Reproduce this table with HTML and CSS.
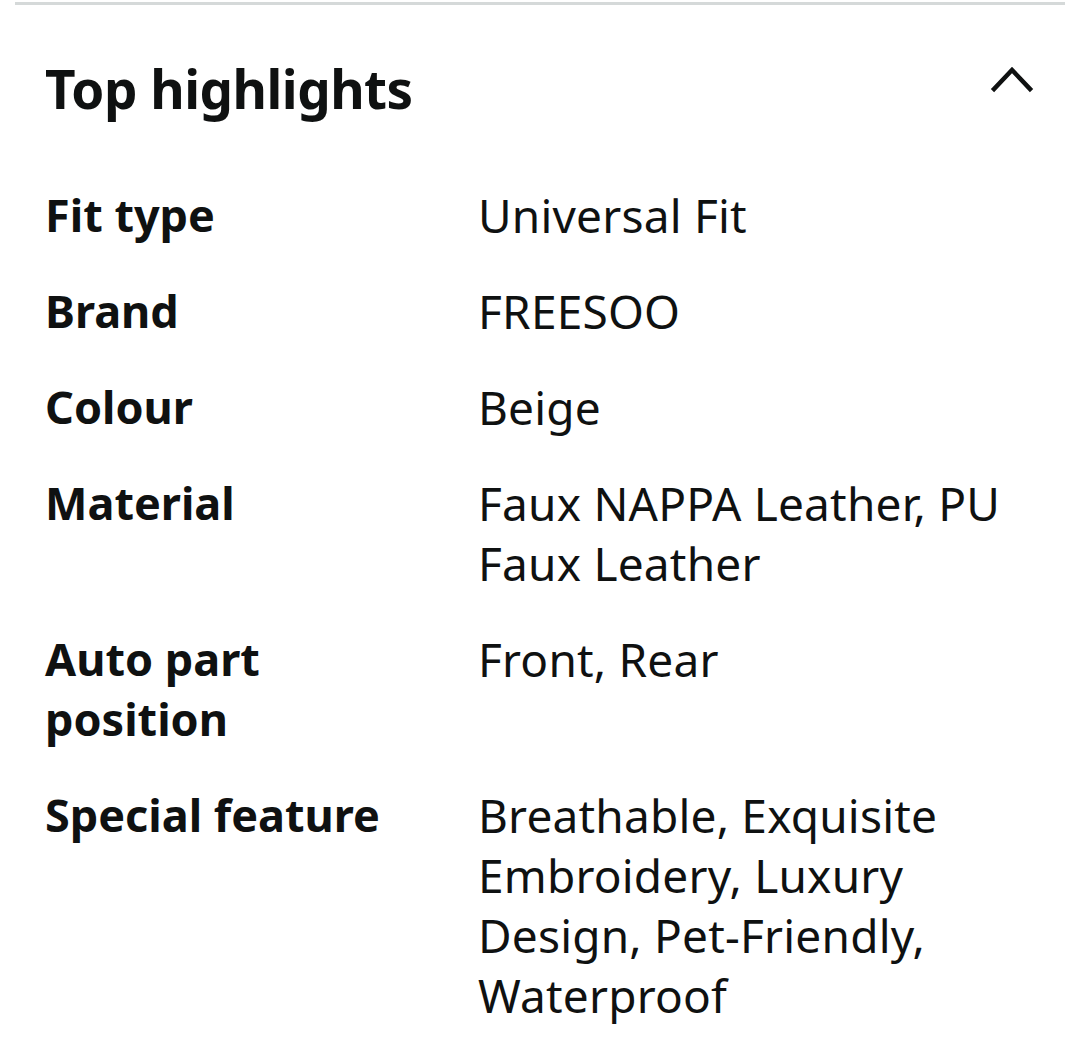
FILE: index.html
```html
<!DOCTYPE html>
<html>
<head>
<meta charset="utf-8">
<link rel="stylesheet" href="styles.css">
</head>
<body>
<div class="panel">
  <div class="rule"></div>
  <div class="head">
    <h2 class="title">Top highlights</h2>
    <svg class="chev" width="44" height="32" viewBox="0 0 44 32"><path d="M4 27 L22 8 L40 27" fill="none" stroke="#0f1111" stroke-width="4.5" stroke-linecap="square" stroke-linejoin="miter"/></svg>
  </div>
  <div class="table">
    <div class="k">Fit type</div><div class="v">Universal Fit</div>
    <div class="k">Brand</div><div class="v">FREESOO</div>
    <div class="k">Colour</div><div class="v">Beige</div>
    <div class="k">Material</div><div class="v">Faux NAPPA Leather, PU Faux Leather</div>
    <div class="k">Auto part position</div><div class="v">Front, Rear</div>
    <div class="k">Special feature</div><div class="v">Breathable, Exquisite Embroidery, Luxury Design, Pet-Friendly, Waterproof</div>
  </div>
</div>
</body>
</html>
```
FILE: styles.css
```css
html, body { margin: 0; padding: 0; background: #fff; }
body { font-family: "Noto Sans", "Open Sans", sans-serif; color: #0f1111; }
.panel { padding: 0 15px; }
.rule { height: 3px; background: #d5d9d9; margin-top: 2px; }
.head { display: flex; justify-content: space-between; align-items: center; padding: 0 31px 0 30px; height: 170px; margin-top: -2px; }
.title { margin: 0; font-size: 53px; font-weight: 700; letter-spacing: -0.5px; }
.chev { display: block; margin-top: -20px; }
.table { display: grid; grid-template-columns: 433px 1fr; row-gap: 36px; padding-left: 30px; padding-right: 20px; font-size: 45px; line-height: 60px; margin-top: 12px; }
.k { font-weight: 700; width: 360px; }
.v { font-weight: 400; font-size: 46px; letter-spacing: 0.2px; }
```
